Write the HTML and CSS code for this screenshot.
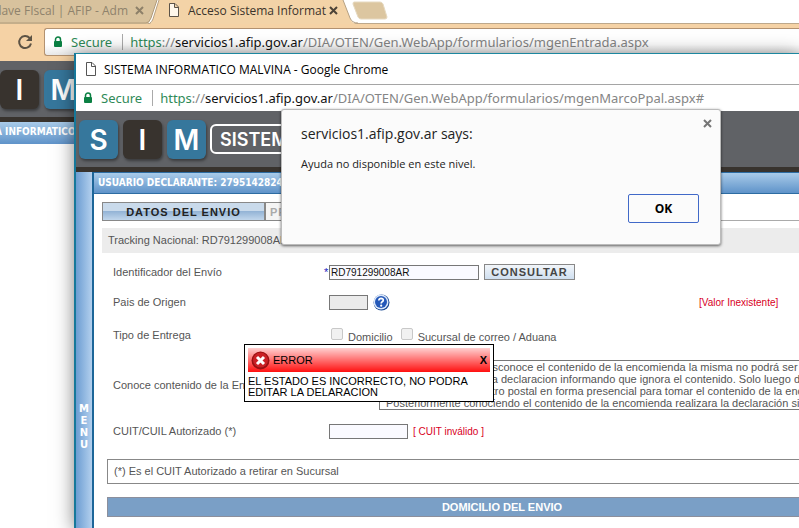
FILE: index.html
```html
<!DOCTYPE html>
<html lang="es">
<head>
    <meta charset="UTF-8">
    <meta name="viewport" content="width=device-width, initial-scale=1.0">
    <title>SISTEMA INFORMATICO MALVINA</title>
    <link rel="stylesheet" href="styles.css">
</head>
<body>
    <div class="desktop">
        <!-- Ventana principal -->
        <div class="browser">
            <div class="tab-strip">
                <div class="tab tab-first">
                    <svg class="tab-shape" viewBox="0 0 158 24" preserveAspectRatio="none"><path d="M0 0H157L151 18Q149 24 146 24H0Z" fill="#d8c29d"/><path d="M157 0L151 18Q149 23 146 23H0" fill="none" stroke="#b09a78"/></svg>
                    <span class="tab-title">Clave FIscal | AFIP - Adm</span>
                    <button class="tab-close" aria-label="Cerrar pestaña"><svg width="9" height="9" viewBox="0 0 9 9"><path d="M1 1L8 8M8 1L1 8" stroke="#8d8069" stroke-width="2"/></svg></button>
                </div>
                <div class="tab tab-active">
                    <svg class="tab-shape" viewBox="0 0 208 24" preserveAspectRatio="none"><path d="M0 24Q2 22 3 19L9 0H193L200 18Q202 24 208 24Z" fill="#f3d3a7"/><path d="M0 23Q2 22 3 19L9 0M193 0L200 18Q202 23 208 23" fill="none" stroke="#b5a083"/></svg>
                    <svg class="page-icon" width="12" height="14" viewBox="0 0 12 14"><path d="M1.5 0.5H7L10.5 4V13.5H1.5ZM6.5 0.5V4.5H10.5" fill="#fff7ea" stroke="#5c5348"/></svg>
                    <span class="tab-title">Acceso Sistema Informat</span>
                    <button class="tab-close" aria-label="Cerrar pestaña"><svg width="9" height="9" viewBox="0 0 9 9"><path d="M1 1L8 8M8 1L1 8" stroke="#4c4338" stroke-width="2"/></svg></button>
                </div>
                <button class="new-tab" aria-label="Nueva pestaña"><svg width="36" height="19" viewBox="0 0 36 19"><path d="M2 1H28Q30 1 31 3L35 16Q35 18 33 18H9Q7 18 6 16L1 3Q1 1 2 1Z" fill="#dcc6a0" stroke="#e6d9c0"/></svg></button>
            </div>
            <div class="toolbar">
                <button class="reload" aria-label="Recargar"><svg width="16" height="16" viewBox="0 0 16 16"><path d="M12.6 4A6 6 0 1 0 14 9.5" fill="none" stroke="#5d5344" stroke-width="2"/><path d="M15 1V7H9Z" fill="#5d5344"/></svg></button>
                <div class="omnibox">
                    <svg class="lock" width="10" height="12" viewBox="0 0 10 12"><path d="M2.5 6V3.5A2.5 2.5 0 0 1 7.5 3.5V6" fill="none" stroke="#0b8043" stroke-width="1.5"/><rect x="1" y="5" width="8" height="6" rx="1" fill="#0b8043"/></svg>
                    <span class="secure">Secure</span>
                    <span class="url"><span class="https">https</span>://<b>servicios1.afip.gov.ar</b>/DIA/OTEN/Gen.WebApp/formularios/mgenEntrada.aspx</span>
                </div>
            </div>
            <div class="banner">
                <div class="logo">
                    <span class="tile dark">I</span>
                    <span class="tile">M</span>
                </div>
            </div>
            <div class="user-bar">A INFORMATICO</div>
        </div>

        <!-- Ventana emergente -->
        <div class="popup">
            <div class="popup-title">
                <svg class="page-icon" width="12" height="14" viewBox="0 0 12 14"><path d="M1.5 0.5H7L10.5 4V13.5H1.5ZM6.5 0.5V4.5H10.5" fill="#fff" stroke="#555"/></svg>
                SISTEMA INFORMATICO MALVINA - Google Chrome
            </div>
            <div class="popup-url">
                <svg class="lock" width="10" height="12" viewBox="0 0 10 12"><path d="M2.5 6V3.5A2.5 2.5 0 0 1 7.5 3.5V6" fill="none" stroke="#0b8043" stroke-width="1.5"/><rect x="1" y="5" width="8" height="6" rx="1" fill="#0b8043"/></svg>
                <span class="secure">Secure</span>
                <span class="url"><span class="https">https</span>://<b>servicios1.afip.gov.ar</b>/DIA/OTEN/Gen.WebApp/formularios/mgenMarcoPpal.aspx#</span>
            </div>
            <div class="banner">
                <div class="logo">
                    <span class="tile">S</span>
                    <span class="tile dark">I</span>
                    <span class="tile">M</span>
                </div>
                <div class="logo-name">SISTEMA</div>
            </div>
            <div class="popup-body">
                <button class="menu">M<br>E<br>N<br>U</button>
                <div class="main">
                    <div class="user-bar">USUARIO DECLARANTE: 27951428240</div>
                    <div class="content">
                        <div class="form-tabs">
                            <button class="form-tab selected">DATOS DEL ENVIO</button>
                            <button class="form-tab">PRODUCTOS</button>
                        </div>
                        <div class="tracking">Tracking Nacional: RD791299008AR</div>
                        <form class="form">
                            <label for="identificador">Identificador del Envío</label>
                            <div class="field">
                                <span class="required">*</span>
                                <input type="text" id="identificador" class="text-id" value="RD791299008AR">
                                <button type="button" class="consultar">CONSULTAR</button>
                            </div>

                            <label for="pais">Pais de Origen</label>
                            <div class="field">
                                <input type="text" id="pais" class="text-pais" disabled>
                                <button type="button" class="help" aria-label="Ayuda"><svg width="17" height="17" viewBox="0 0 17 17"><circle cx="8.5" cy="8.5" r="8" fill="#1b4a94"/><circle cx="8" cy="8" r="7.5" fill="#dce8fa"/><circle cx="8" cy="8" r="6" fill="#2458b8"/><path d="M5.8 6.5Q6 4.3 8.1 4.3Q10.4 4.4 10.3 6.2Q10.2 7.3 8.9 8Q8.2 8.4 8.2 9.5" fill="none" stroke="#fff" stroke-width="1.7"/><circle cx="8.2" cy="11.7" r="1.1" fill="#fff"/></svg></button>
                                <span class="warning inexistente">[Valor Inexistente]</span>
                            </div>

                            <span>Tipo de Entrega</span>
                            <div class="field checks">
                                <input type="checkbox" id="domicilio" disabled>
                                <label for="domicilio">Domicilio</label>
                                <input type="checkbox" id="sucursal" disabled>
                                <label for="sucursal">Sucursal de correo / Aduana</label>
                            </div>

                            <label for="conoce">Conoce contenido de la Encomienda</label>
                            <div class="field">
                                <input type="checkbox" id="conoce" disabled>
                                <div class="info">
                                    En caso de que se desconoce el contenido de la encomienda la misma no podrá ser entregada<br>
                                    Se debe presentar una declaracion informando que ignora el contenido. Solo luego de ello<br>
                                    presentarse en el centro postal en forma presencial para tomar el contenido de la encomienda<br>
                                    Posteriormente conociendo el contenido de la encomienda realizara la declaración simple
                                </div>
                            </div>

                            <label for="cuit">CUIT/CUIL Autorizado (*)</label>
                            <div class="field">
                                <input type="text" id="cuit" class="text-cuit">
                                <span class="warning">[ CUIT inválido ]</span>
                            </div>
                        </form>
                        <div class="note">(*) Es el CUIT Autorizado a retirar en Sucursal</div>
                        <h2 class="section">DOMICILIO DEL ENVIO</h2>
                    </div>
                </div>
            </div>
        </div>

        <!-- Mensaje de error de la página -->
        <div class="error-box">
            <div class="error-head">
                <svg width="19" height="19" viewBox="0 0 19 19"><circle cx="9.5" cy="9.5" r="9" fill="#991012"/><circle cx="9.5" cy="9" r="7.5" fill="#ca2025"/><path d="M6 6L13 13M13 6L6 13" stroke="#fff" stroke-width="3"/></svg>
                <span>ERROR</span>
                <button class="error-close">X</button>
            </div>
            <p>EL ESTADO ES INCORRECTO, NO PODRA EDITAR LA DELARACION</p>
        </div>

        <!-- Alerta del navegador -->
        <div class="alert" role="alertdialog">
            <div class="alert-title">servicios1.afip.gov.ar says:</div>
            <p>Ayuda no disponible en este nivel.</p>
            <button class="ok">OK</button>
            <button class="alert-close" aria-label="Cerrar"><svg width="9" height="9" viewBox="0 0 9 9"><path d="M1 1L8 8M8 1L1 8" stroke="#757575" stroke-width="2"/></svg></button>
        </div>
    </div>
</body>
</html>
```

FILE: styles.css
```css
* {
    box-sizing: border-box;
}

body {
    margin: 0;
    font-family: "Liberation Sans", Arial, sans-serif;
    font-size: 11px;
    color: #555;
    background-color: #fff;
}

button {
    margin: 0;
    padding: 0;
    border: 0;
    background: none;
    font-family: inherit;
}

svg {
    display: block;
    flex: none;
}

p {
    margin: 0;
}

.desktop {
    position: relative;
    min-height: 100vh;
    overflow: hidden;
}

/* Ventana principal */
.tab-strip {
    display: flex;
    height: 24px;
    border-bottom: 1px solid #bda88b;
    font-family: "Open Sans", "Noto Sans", sans-serif;
    font-size: 12px;
}

.tab {
    position: relative;
    display: flex;
    align-items: center;
    height: 24px;
    padding-bottom: 4px;
    white-space: nowrap;
}

.tab-shape {
    position: absolute;
    inset: 0;
    width: 100%;
    height: 100%;
}

.tab-title,
.tab-close,
.tab .page-icon {
    position: relative;
}

.tab-title {
    flex: 1;
    overflow: hidden;
}

.tab-first {
    width: 158px;
    padding-right: 14px;
    color: #8f826c;
}

.tab-first .tab-title {
    display: flex;
    justify-content: flex-end;
    margin-right: 7px;
}

.tab-active {
    width: 208px;
    margin-left: -8px;
    padding: 0 20px 4px 18px;
    color: #3c342b;
}

.tab-active .page-icon {
    margin-right: 8px;
}

.new-tab {
    height: 19px;
    margin: 1px 0 0 -6px;
}

.toolbar {
    display: flex;
    align-items: flex-start;
    height: 37px;
    padding: 4px 0 0 17px;
    gap: 11px;
    background-color: #f5d2a5;
}

.reload {
    padding-top: 6px;
}

.omnibox,
.popup-url {
    display: flex;
    align-items: center;
    font-family: "Noto Sans", "Open Sans", sans-serif;
    font-size: 13px;
    white-space: nowrap;
}

.omnibox {
    flex: 1;
    height: 28px;
    padding-left: 8px;
    border: 1px solid #b39271;
    border-right: 0;
    border-radius: 3px 0 0 3px;
    background: linear-gradient(#fff 60%, #e8e8e8);
}

.secure {
    margin-left: 8px;
    padding-right: 10px;
    border-right: 1px solid #aaa;
    line-height: 16px;
    color: #2f8a58;
}

.url {
    margin-left: 7px;
    color: #858585;
}

.url b {
    font-weight: normal;
    color: #111;
}

.https {
    color: #2f8a58;
}

.banner {
    display: flex;
    align-items: center;
    height: 61px;
    border-bottom: 5px solid #38332e;
    background-color: #606266;
    overflow: hidden;
}

.logo {
    display: flex;
    gap: 5px;
}

.tile {
    width: 39px;
    height: 39px;
    border-radius: 6px;
    background-color: #36779c;
    box-shadow: 1px 2px 3px rgba(0, 0, 0, 0.4);
    color: #fff;
    font-family: "Inter", sans-serif;
    font-size: 28px;
    font-weight: 600;
    line-height: 40px;
    text-align: center;
}

.tile.dark {
    background-color: #38332e;
}

.user-bar {
    height: 22px;
    padding-left: 4px;
    border-top: 1px solid #2d6ca2;
    border-bottom: 1px solid #2d6ca2;
    background: linear-gradient(#a9cbe9, #5f93c9);
    color: #fff;
    font-family: "DejaVu Sans Condensed", "Noto Sans", sans-serif;
    font-size: 10px;
    font-weight: bold;
    line-height: 20px;
    white-space: nowrap;
}

.browser .user-bar {
    padding-left: 0;
    border: 0;
    text-indent: -5px;
}

/* Ventana emergente */
.popup {
    position: absolute;
    top: 53px;
    right: 0;
    bottom: 0;
    left: 74px;
    display: flex;
    flex-direction: column;
    border-top: 1px solid #1c87a0;
    border-left: 2px solid #16789a;
    background-color: #fff;
    box-shadow: 0 2px 18px rgba(0, 0, 0, 0.5);
    overflow: hidden;
}

.popup-title {
    display: flex;
    align-items: center;
    flex: none;
    height: 31px;
    padding-left: 9px;
    gap: 7px;
    border-bottom: 1px solid #a5a5a5;
    color: #000;
    font-family: "Open Sans", "Noto Sans", sans-serif;
    font-size: 12px;
}

.popup-url {
    flex: none;
    height: 26px;
    padding-left: 7px;
}

.popup .banner {
    flex: none;
    padding-left: 3px;
    gap: 4px;
}

.logo-name {
    width: 150px;
    height: 30px;
    padding-left: 8px;
    border: 2px solid #fff;
    border-radius: 6px;
    color: #fff;
    font-family: "Inter", sans-serif;
    font-size: 18px;
    font-weight: 600;
    line-height: 28px;
}

.popup-body {
    display: flex;
    flex: 1;
}

.menu {
    width: 18px;
    padding-top: 154px;
    border-right: 2px solid #1d6699;
    background: linear-gradient(90deg, #6c9dd2, #b3d0ee);
    color: #fff;
    font-family: "DejaVu Sans", sans-serif;
    font-size: 10px;
    font-weight: bold;
    line-height: 12px;
}

.main {
    flex: 1;
    min-width: 0;
}

/* El formulario es mas ancho que la ventana */
.content {
    margin-right: -98px;
    padding: 8px 0 0 8px;
}

.form-tabs {
    display: flex;
    height: 19px;
    border-bottom: 1px solid #aaa;
}

.form-tab {
    width: 150px;
    height: 19px;
    border: 1px solid #888;
    background-color: #f4f4f4;
    color: #aaa;
    font-size: 11px;
    font-weight: bold;
    letter-spacing: 1px;
    text-align: left;
    padding-left: 4px;
}

.form-tab.selected {
    width: 163px;
    padding: 0;
    background: linear-gradient(#c9daeb 45%, #94b4d6 50%, #c1d6eb);
    color: #222;
    text-align: center;
}

.tracking {
    height: 25px;
    margin-top: 7px;
    padding-left: 6px;
    background-color: #ececec;
    line-height: 25px;
}

.form {
    display: grid;
    grid-template-columns: 216px 1fr;
    grid-template-rows: 30px 30px 36px 64px 28px;
    align-items: center;
    margin-top: 4px;
    padding-left: 11px;
    white-space: nowrap;
}

.field {
    display: flex;
    align-items: center;
}

.required {
    width: 5px;
    margin-left: -5px;
    color: #2020c0;
}

input[type="text"] {
    height: 15px;
    margin: 0;
    padding: 0 1px;
    border: 1px solid #777;
    background-color: #fafaff;
    color: #111;
    font-family: inherit;
    font-size: 10px;
}

input[type="text"]:disabled {
    background-color: #ebebeb;
}

.text-id {
    width: 150px;
}

.text-pais {
    width: 39px;
}

.text-cuit {
    width: 79px;
}

.consultar {
    width: 91px;
    height: 16px;
    margin-left: 5px;
    border: 1px solid #888;
    background: linear-gradient(#f2f6fa, #cfdff0);
    color: #444;
    font-size: 11px;
    font-weight: bold;
    line-height: 14px;
    letter-spacing: 1px;
}

.help {
    margin-left: 5px;
}

.warning {
    margin-left: 5px;
    color: #d8001d;
    font-size: 10px;
}

.inexistente {
    margin-left: 309px;
}

input[type="checkbox"] {
    appearance: none;
    width: 12px;
    height: 12px;
    margin: 0 5px 0 2px;
    border: 1px solid #c8c8c8;
    border-radius: 2px;
    background-color: #f1f1f1;
}

.checks {
    align-items: flex-start;
}

.checks label {
    margin-right: 6px;
    padding-top: 3px;
}

.info {
    flex: 1;
    margin-left: 31px;
    padding-left: 6px;
    border: 1px solid #777;
    line-height: 12px;
}

.note {
    height: 25px;
    margin: 14px 0 0 5px;
    padding-left: 6px;
    border: 1px solid #888;
    line-height: 23px;
}

.section {
    height: 20px;
    margin: 13px 0 0 5px;
    border: 1px solid #8c8f9c;
    background-color: #7a9fc6;
    color: #fff;
    font-size: 11px;
    line-height: 18px;
    text-align: center;
}

/* Mensaje de error */
.error-box {
    position: absolute;
    top: 344px;
    left: 244px;
    width: 250px;
    padding: 3px;
    border: 1px solid #000;
    background-color: #fff;
    color: #000;
}

.error-head {
    display: flex;
    align-items: center;
    height: 24px;
    padding: 0 3px;
    gap: 3px;
    background: linear-gradient(#ffd0d0, #ff1010);
}

.error-close {
    margin-left: auto;
    color: #000;
    font-size: 11px;
    font-weight: bold;
}

.error-box p {
    padding-top: 4px;
    line-height: 11px;
    height: 26px;
}

/* Alerta */
.alert {
    position: absolute;
    top: 109px;
    left: 281px;
    width: 440px;
    display: flex;
    flex-direction: column;
    padding: 14px 21px 21px 19px;
    border: 1px solid #bbb;
    border-radius: 3px;
    background-color: #fbfbfb;
    box-shadow: 0 1px 3px rgba(0, 0, 0, 0.6);
    color: #222;
    font-family: "Open Sans", "Noto Sans", sans-serif;
    font-size: 11px;
}

.alert-title {
    font-size: 14px;
    line-height: 20px;
}

.alert p {
    margin-top: 10px;
    line-height: 20px;
}

.ok {
    align-self: flex-end;
    width: 71px;
    height: 29px;
    margin-top: 20px;
    border: 1px solid #4169c8;
    border-radius: 2px;
    color: #000;
    font-size: 12px;
    font-weight: bold;
}

.alert-close {
    position: absolute;
    top: 9px;
    right: 8px;
}
```
